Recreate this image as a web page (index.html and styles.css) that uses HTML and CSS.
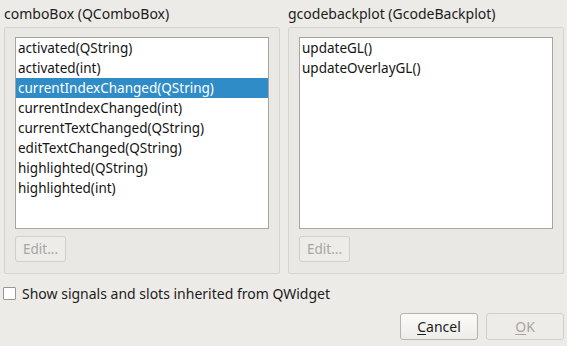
FILE: index.html
```html
<!doctype html>
<html lang="en">
  <head>
    <meta charset="UTF-8" />
    <title>Configure Connection</title>
    <link rel="stylesheet" href="styles.css">
  </head>
  <body>
    <div class="dialog">
      <div class="columns">
        <div class="column">
          <div class="group-title">comboBox (QComboBox)</div>
          <div class="group-box">
            <ul class="list">
              <li class="list-item">activated(QString)</li>
              <li class="list-item">activated(int)</li>
              <li class="list-item selected">currentIndexChanged(QString)</li>
              <li class="list-item">currentIndexChanged(int)</li>
              <li class="list-item">currentTextChanged(QString)</li>
              <li class="list-item">editTextChanged(QString)</li>
              <li class="list-item">highlighted(QString)</li>
              <li class="list-item">highlighted(int)</li>
            </ul>
            <button class="btn btn-edit" disabled>Edit...</button>
          </div>
        </div>

        <div class="column">
          <div class="group-title">gcodebackplot (GcodeBackplot)</div>
          <div class="group-box">
            <ul class="list">
              <li class="list-item">updateGL()</li>
              <li class="list-item">updateOverlayGL()</li>
            </ul>
            <button class="btn btn-edit" disabled>Edit...</button>
          </div>
        </div>
      </div>

      <label class="check-row">
        <span class="check-box"></span>
        Show signals and slots inherited from QWidget
      </label>

      <div class="button-row">
        <button class="btn btn-dialog"><u>C</u>ancel</button>
        <button class="btn btn-dialog" disabled><u>O</u>K</button>
      </div>
    </div>
  </body>
</html>
```

FILE: styles.css
```css
* {
  margin: 0;
  padding: 0;
  box-sizing: border-box;
}

body {
  font-family: "Noto Sans", "DejaVu Sans", sans-serif;
  font-size: 13.5px;
  color: #2e3436;
  background: #edebe8;
  width: 567px;
  height: 346px;
  overflow: hidden;
}

.dialog {
  padding: 4px 3px 0 4px;
}

.columns {
  display: flex;
  gap: 8px;
}

.column {
  flex: 1;
}

.group-title {
  height: 20px;
  line-height: 20px;
  margin-bottom: 3px;
  font-size: 14px;
  color: #1c1c1c;
}

.group-box {
  border: 1px solid #d7d3ce;
  border-radius: 2px;
  background: #eae8e4;
  padding: 9px 10px 11px;
}

.list {
  list-style: none;
  height: 192px;
  background: white;
  border: 1px solid #a8a5a1;
  margin-bottom: 7px;
}

.list-item {
  height: 20px;
  line-height: 20px;
  padding-left: 2px;
  color: #141414;
  white-space: nowrap;
}

.list-item.selected {
  background: #308cc6;
  color: white;
}

.btn {
  font-family: inherit;
  font-size: 14px;
  border: 1px solid #b6b2ad;
  border-radius: 3px;
  background: linear-gradient(#fbfbfa, #eeece9);
  color: #1c1c1c;
}

.btn:disabled {
  border-color: #d2cec9;
  background: #eeece9;
  color: #a8a5a1;
}

.btn-edit {
  width: 51px;
  height: 26px;
  display: block;
  font-size: 13.5px;
}

.check-row {
  display: flex;
  align-items: center;
  gap: 6px;
  margin-top: 9px;
  margin-left: -1px;
  height: 20px;
  font-size: 14px;
  color: #1c1c1c;
}

.check-box {
  width: 13px;
  height: 13px;
  background: white;
  border: 1px solid #9a9793;
  border-radius: 1px;
}

.button-row {
  display: flex;
  justify-content: flex-end;
  gap: 8px;
  margin-top: 10px;
}

.btn-dialog {
  width: 78px;
  height: 27px;
}

.btn u {
  text-decoration-thickness: 1px;
  text-underline-offset: 2px;
}
```
